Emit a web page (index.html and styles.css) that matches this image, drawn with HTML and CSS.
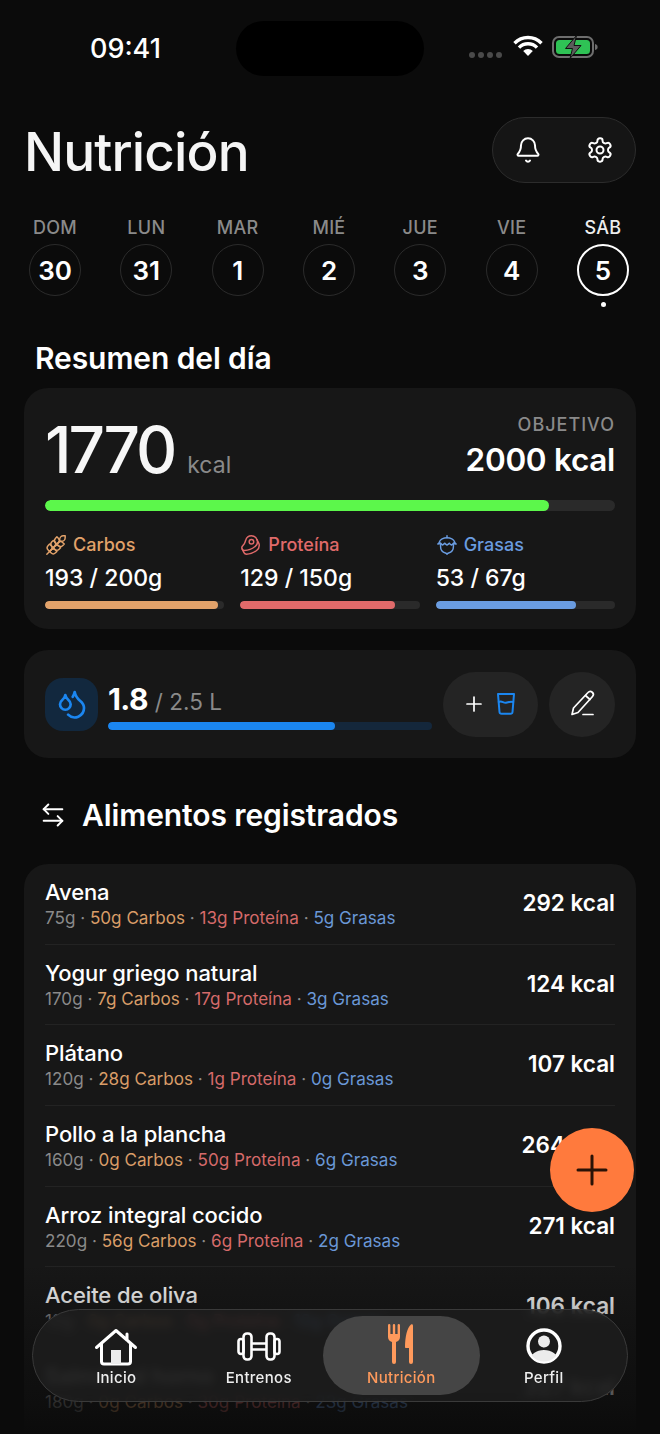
FILE: index.html
```html
<!DOCTYPE html>
<html lang="es">
<head>
<meta charset="utf-8">
<title>Nutrición</title>
<link rel="stylesheet" href="styles.css">
</head>
<body>
<div class="phone">
  <header class="status">
    <span class="time">09:41</span>
    <div class="island"></div>
    <div class="sys">
      <div class="signal"><i></i><i></i><i></i><i></i></div>
      <svg class="wifi" width="30" height="22" viewBox="0 0 30 22"><path d="M1.500 8.200a19 19 0 0 1 27 0M6 12.600a12.600 12.600 0 0 1 18 0" fill="none" stroke="#fff" stroke-width="3.400"/><path d="M10.200 16a6.600 6.600 0 0 1 9.600 0L15 21z" fill="#fff"/></svg>
      <svg class="batt" width="46" height="24" viewBox="0 0 46 24"><rect x="1" y="2" width="40" height="20" rx="6" fill="none" stroke="#6e6e6e" stroke-width="2"/><rect x="4" y="5" width="34" height="14" rx="3.500" fill="#2fc255"/><path d="M43 9c2 .5 2.600 1.500 2.600 3s-.6 2.500-2.600 3z" fill="#6e6e6e"/><path d="M24.500 .5 13.500 13.500h7L18 23.500 29 10.500h-7z" fill="#5c5c5c" stroke="#101010" stroke-width="1"/></svg>
    </div>
  </header>

  <div class="title-row">
    <h1>Nutrición</h1>
    <div class="actions">
      <svg class="ico" width="28" height="28" viewBox="0 0 24 24"><path d="M10.268 21a2 2 0 0 0 3.464 0"/><path d="M3.262 15.326A1 1 0 0 0 4 17h16a1 1 0 0 0 .74-1.673C19.410 13.956 18 12.499 18 8A6 6 0 0 0 6 8c0 4.499-1.411 5.956-2.738 7.326"/></svg>
      <svg class="ico" width="28" height="28" viewBox="0 0 24 24"><path d="M12.220 2h-.44a2 2 0 0 0-2 2v.18a2 2 0 0 1-1 1.730l-.43.25a2 2 0 0 1-2 0l-.15-.08a2 2 0 0 0-2.730.73l-.22.38a2 2 0 0 0 .73 2.730l.15.1a2 2 0 0 1 1 1.720v.51a2 2 0 0 1-1 1.740l-.15.09a2 2 0 0 0-.73 2.730l.22.38a2 2 0 0 0 2.730.73l.15-.08a2 2 0 0 1 2 0l.43.25a2 2 0 0 1 1 1.730V20a2 2 0 0 0 2 2h.44a2 2 0 0 0 2-2v-.18a2 2 0 0 1 1-1.730l.43-.25a2 2 0 0 1 2 0l.15.08a2 2 0 0 0 2.730-.73l.22-.39a2 2 0 0 0-.73-2.730l-.15-.08a2 2 0 0 1-1-1.740v-.5a2 2 0 0 1 1-1.740l.15-.09a2 2 0 0 0 .73-2.730l-.22-.38a2 2 0 0 0-2.730-.73l-.15.08a2 2 0 0 1-2 0l-.43-.25a2 2 0 0 1-1-1.730V4a2 2 0 0 0-2-2z"/><circle cx="12" cy="12" r="3"/></svg>
    </div>
  </div>

  <div class="days">
    <div class="day"><span class="dn">DOM</span><span class="dc">30</span></div>
    <div class="day"><span class="dn">LUN</span><span class="dc">31</span></div>
    <div class="day"><span class="dn">MAR</span><span class="dc">1</span></div>
    <div class="day"><span class="dn">MIÉ</span><span class="dc">2</span></div>
    <div class="day"><span class="dn">JUE</span><span class="dc">3</span></div>
    <div class="day"><span class="dn">VIE</span><span class="dc">4</span></div>
    <div class="day today"><span class="dn">SÁB</span><span class="dc">5</span><i class="dot"></i></div>
  </div>

  <h2 class="resumen">Resumen del día</h2>

  <section class="card summary">
    <div class="sum-top">
      <div class="consumed"><span class="big">1770</span><span class="unit">kcal</span></div>
      <div class="goal"><span class="goal-l">OBJETIVO</span><span class="goal-v">2000 kcal</span></div>
    </div>
    <div class="bar main-bar"><b style="width:88.400%"></b></div>
    <div class="macros">
      <div class="macro carb">
        <div class="m-label"><svg class="mi" width="22" height="22" viewBox="0 0 24 24"><path d="M2 22 16 8"/><path d="M3.470 12.530 5 11l1.530 1.530a3.500 3.500 0 0 1 0 4.940L5 19l-1.530-1.530a3.500 3.500 0 0 1 0-4.940Z"/><path d="M7.470 8.530 9 7l1.530 1.530a3.500 3.500 0 0 1 0 4.940L9 15l-1.530-1.530a3.500 3.500 0 0 1 0-4.940Z"/><path d="M11.470 4.530 13 3l1.530 1.530a3.500 3.500 0 0 1 0 4.940L13 11l-1.530-1.530a3.500 3.500 0 0 1 0-4.940Z"/><path d="M20 2h2v2a4 4 0 0 1-4 4h-2V6a4 4 0 0 1 4-4Z"/><path d="M11.470 17.470 13 19l-1.530 1.530a3.500 3.500 0 0 1-4.940 0L5 19l1.530-1.530a3.500 3.500 0 0 1 4.940 0Z"/><path d="M15.470 13.470 17 15l-1.530 1.530a3.500 3.500 0 0 1-4.940 0L9 15l1.530-1.530a3.500 3.500 0 0 1 4.940 0Z"/><path d="M19.470 9.470 21 11l-1.530 1.530a3.500 3.500 0 0 1-4.940 0L13 11l1.530-1.530a3.500 3.500 0 0 1 4.940 0Z"/></svg>Carbos</div>
        <div class="m-val">193 / 200g</div>
        <div class="bar thin"><b style="width:96.500%"></b></div>
      </div>
      <div class="macro prot">
        <div class="m-label"><svg class="mi" width="22" height="22" viewBox="0 0 24 24"><circle cx="12.500" cy="8.500" r="2.500"/><path d="M12.500 2a6.500 6.500 0 0 0-6.220 4.600c-1.100 3.130-.78 3.900-3.180 6.080A3 3 0 0 0 5 18c4 0 8.400-1.800 11.400-4.300A6.500 6.500 0 0 0 12.500 2Z"/><path d="m18.500 6 2.190 4.500a6.480 6.480 0 0 1 .31 2 6.490 6.490 0 0 1-2.600 5.200C15.400 20.200 11 22 7 22a3 3 0 0 1-2.680-1.660L2.400 16.500"/></svg>Proteína</div>
        <div class="m-val">129 / 150g</div>
        <div class="bar thin"><b style="width:86%"></b></div>
      </div>
      <div class="macro fat">
        <div class="m-label"><svg class="mi" width="22" height="22" viewBox="0 0 24 24"><path d="M12 4V2"/><path d="M5 10v4a7.004 7.004 0 0 0 5.277 6.787c.412.104.802.292 1.102.592L12 22l.621-.621c.3-.3.69-.488 1.102-.592A7.003 7.003 0 0 0 19 14v-4"/><path d="M12 4C8 4 4.500 6 4 8c-.243.97-.919 1.952-2 3 1.310-.082 1.972-.29 3-1 .54.92.982 1.356 2 2 1.452-.647 1.954-1.098 2.500-2 .595.995 1.151 1.427 2.500 2 1.310-.621 1.862-1.058 2.500-2 .629.977 1.162 1.423 2.500 2 1.209-.548 1.680-.967 2-2 1.032.916 1.683 1.157 3 1-1.297-1.036-1.758-2.034-2-3-.5-2-4-4-8-4Z"/></svg>Grasas</div>
        <div class="m-val">53 / 67g</div>
        <div class="bar thin"><b style="width:78.500%"></b></div>
      </div>
    </div>
  </section>

  <section class="card water">
    <div class="w-icon"><svg class="blue" width="32" height="32" viewBox="0 0 24 24"><path d="M7 16.300c2.200 0 4-1.830 4-4.050 0-1.160-.57-2.260-1.710-3.190S7.290 6.750 7 5.300c-.29 1.450-1.140 2.840-2.290 3.760S3 11.100 3 12.250c0 2.220 1.800 4.050 4 4.050z"/><path d="M12.560 6.600A10.970 10.970 0 0 0 14 3.020c.5 2.500 2 4.900 4 6.500s3 3.500 3 5.500a6.980 6.980 0 0 1-11.910 4.970"/></svg></div>
    <div class="w-main">
      <div class="w-text"><span class="w-val">1.8</span><span class="w-of">/ 2.5 L</span></div>
      <div class="bar w-bar"><b style="width:70%"></b></div>
    </div>
    <div class="w-add">
      <svg class="ico" width="18" height="18" viewBox="0 0 18 18"><path d="M9 2v14M2 9h14"/></svg>
      <svg class="blue" width="20" height="26" viewBox="0 0 20 24"><path d="M2 2h16l-1.500 18a2 2 0 0 1-2 1.800h-9a2 2 0 0 1-2-1.800z"/><path d="M2.800 10c3-1.500 4.500 1.200 7.200.7s4-1.600 7.200-.7"/></svg>
    </div>
    <div class="w-edit">
      <svg class="ico" width="30" height="30" viewBox="0 0 30 30"><path d="M21 3.500a3 3 0 0 1 4.500 4L11 23.500l-6 2 1.500-6.500z"/><path d="M18.500 6.500l4.500 4M16 25.500h10"/></svg>
    </div>
  </section>

  <div class="log-head">
    <svg class="ico" width="28" height="28" viewBox="0 0 24 24"><path d="m8 3-4 4 4 4"/><path d="M4 7h16"/><path d="m16 13 4 4-4 4"/><path d="M20 17H4"/></svg>
    <h2>Alimentos registrados</h2>
  </div>

  <section class="card foods">
    <div class="food"><div class="f-main"><div class="f-name">Avena</div><div class="f-sub">75g · <span class="c">50g Carbos</span> · <span class="p">13g Proteína</span> · <span class="g">5g Grasas</span></div></div><div class="f-kcal">292 kcal</div></div>
    <div class="food"><div class="f-main"><div class="f-name">Yogur griego natural</div><div class="f-sub">170g · <span class="c">7g Carbos</span> · <span class="p">17g Proteína</span> · <span class="g">3g Grasas</span></div></div><div class="f-kcal">124 kcal</div></div>
    <div class="food"><div class="f-main"><div class="f-name">Plátano</div><div class="f-sub">120g · <span class="c">28g Carbos</span> · <span class="p">1g Proteína</span> · <span class="g">0g Grasas</span></div></div><div class="f-kcal">107 kcal</div></div>
    <div class="food"><div class="f-main"><div class="f-name">Pollo a la plancha</div><div class="f-sub">160g · <span class="c">0g Carbos</span> · <span class="p">50g Proteína</span> · <span class="g">6g Grasas</span></div></div><div class="f-kcal">264 kcal</div></div>
    <div class="food"><div class="f-main"><div class="f-name">Arroz integral cocido</div><div class="f-sub">220g · <span class="c">56g Carbos</span> · <span class="p">6g Proteína</span> · <span class="g">2g Grasas</span></div></div><div class="f-kcal">271 kcal</div></div>
    <div class="food"><div class="f-main"><div class="f-name">Aceite de oliva</div><div class="f-sub">12g · <span class="c">0g Carbos</span> · <span class="p">0g Proteína</span> · <span class="g">12g Grasas</span></div></div><div class="f-kcal">106 kcal</div></div>
    <div class="food"><div class="f-main"><div class="f-name">Salmón al horno</div><div class="f-sub">180g · <span class="c">0g Carbos</span> · <span class="p">30g Proteína</span> · <span class="g">23g Grasas</span></div></div><div class="f-kcal">327 kcal</div></div>
  </section>

  <div class="fade"></div>

  <button class="fab" aria-label="Añadir"><svg width="34" height="34" viewBox="0 0 34 34"><path d="M17 3v28M3 17h28" fill="none" stroke="#2a1206" stroke-width="3" stroke-linecap="round"/></svg></button>

  <nav class="nav">
    <div class="tab">
      <svg width="44" height="38" viewBox="0 0 44 38"><path d="M2.500 19.500 22 2.500l19.500 17M33 6v6M7.500 16v17.500a2.500 2.500 0 0 0 2.500 2.500h24a2.500 2.500 0 0 0 2.500-2.500V16" fill="none" stroke="#fff" stroke-width="3" stroke-linecap="round" stroke-linejoin="round"/><rect x="17" y="22" width="10" height="14" fill="#ececec"/></svg>
      <span>Inicio</span>
    </div>
    <div class="tab">
      <svg width="44" height="38" viewBox="0 0 44 38"><g fill="none" stroke="#fff" stroke-width="2.600" stroke-linejoin="round"><rect x="1.500" y="11" width="5" height="15" rx="2.500"/><rect x="6.500" y="5.500" width="8" height="26" rx="3.500"/><rect x="29.500" y="5.500" width="8" height="26" rx="3.500"/><rect x="37.500" y="11" width="5" height="15" rx="2.500"/><path d="M14.500 15.500h15M14.500 21.500h15"/></g></svg>
      <span>Entrenos</span>
    </div>
    <div class="tab active">
      <svg width="44" height="42" viewBox="0 0 44 42"><path d="M9 1.200a1.200 1.200 0 0 1 2.400 0V10h2.400V1.200a1.200 1.200 0 0 1 2.400 0V10h2.400V1.200a1.200 1.200 0 0 1 2.400 0V13c0 2.500-1.600 4.400-4 5V38a2 2 0 0 1-4 0V18c-2.400-.6-4-2.500-4-5z" fill="#ff9a5c"/><path d="M32 .5c1.200-.8 2-.2 2 1.500V38a2 2 0 0 1-4 0V24h-3c-.7 0-1-.5-1-1C26 13 28 4 32 .5z" fill="#ff9a5c"/></svg>
      <span>Nutrición</span>
    </div>
    <div class="tab">
      <svg width="44" height="38" viewBox="0 0 44 38"><defs><clipPath id="ring"><circle cx="22" cy="18" r="15.500"/></clipPath></defs><circle cx="22" cy="18" r="16" fill="none" stroke="#fff" stroke-width="3.400"/><circle cx="22" cy="13.500" r="6" fill="#ececec"/><ellipse cx="22" cy="32" rx="14" ry="10" fill="#ececec" clip-path="url(#ring)"/></svg>
      <span>Perfil</span>
    </div>
  </nav>
</div>
</body>
</html>
```
FILE: styles.css
```css
* { box-sizing: border-box; margin: 0; padding: 0; }
html, body { background: #0b0b0b; }
body { font-family: Inter, "Liberation Sans", sans-serif; color: #fff; }
.phone { position: relative; width: 660px; height: 1434px; overflow: hidden; background: #0b0b0b; padding: 0 24px; }

.ico { fill: none; stroke: #fff; stroke-width: 1.700; stroke-linecap: round; stroke-linejoin: round; }
.blue { fill: none; stroke: #1b86f0; stroke-width: 2; stroke-linecap: round; stroke-linejoin: round; }

.status { position: relative; height: 96px; display: flex; align-items: flex-start; }
.time { margin: 33px 0 0 66px; font-size: 27px; line-height: 32px; font-weight: 500; }
.island { position: absolute; left: 212px; top: 21px; width: 188px; height: 55px; border-radius: 28px; background: #000; }
.sys { margin-left: auto; margin-top: 35px; margin-right: 38px; display: flex; align-items: center; gap: 9px; }
.signal { display: flex; gap: 3px; margin-top: 16px; margin-right: 2px; }
.signal i { width: 6px; height: 6px; border-radius: 50%; background: #4a4a4a; }
.wifi { margin-top: -2px; }

.title-row { display: flex; align-items: center; justify-content: space-between; height: 66px; margin-top: 21px; }
h1 { font-size: 53px; line-height: 66px; font-weight: 500; letter-spacing: -.85px; color: #f5f5f5; margin-top: 4px; }
.actions { width: 144px; height: 66px; border-radius: 33px; border: 1px solid #2c2c2c; background: #151515; display: flex; align-items: center; justify-content: center; gap: 44px; }

.days { display: flex; justify-content: space-between; margin-top: 34px; padding: 0 7px 0 5px; }
.day { position: relative; width: 52px; display: flex; flex-direction: column; align-items: center; gap: 5px; }
.dn { font-size: 18px; line-height: 22px; font-weight: 500; letter-spacing: .3px; color: #8a8a8a; white-space: nowrap; }
.dc { width: 52px; height: 52px; border-radius: 50%; border: 1.500px solid #2b2b2b; display: flex; align-items: center; justify-content: center; font-size: 26px; font-weight: 600; }
.today .dn { color: #eee; }
.today .dc { border: 2px solid #fff; }
.dot { position: absolute; left: 24px; bottom: -11px; width: 5px; height: 5px; border-radius: 50%; background: #fff; }

.resumen { font-size: 30px; line-height: 36px; font-weight: 600; margin: 44px 0 12px 11px; letter-spacing: -.1px; }

.card { background: #171717; border-radius: 24px; }
.summary { height: 241px; padding: 21px 21px 0; }
.sum-top { display: flex; justify-content: space-between; height: 91px; }
.consumed { display: flex; align-items: flex-end; gap: 13px; height: 78px; }
.big { font-size: 64px; line-height: 78px; font-weight: 500; letter-spacing: -3px; color: #f7f7f7; margin-bottom: -2px; }
.unit { font-size: 23px; line-height: 26px; color: #8a8a8a; margin-bottom: 9px; }
.goal { display: flex; flex-direction: column; align-items: flex-end; gap: 4px; margin-top: 4px; }
.goal-l { font-size: 18px; line-height: 24px; font-weight: 500; letter-spacing: 1px; color: #8a8a8a; }
.goal-v { font-size: 31.500px; line-height: 38px; font-weight: 600; letter-spacing: -.3px; }

.bar { background: #2a2a2a; border-radius: 6px; overflow: hidden; }
.bar b { display: block; height: 100%; border-radius: 6px; }
.main-bar { height: 11px; }
.main-bar b { background: #5cf74b; }
.macros { display: grid; grid-template-columns: repeat(3, 1fr); gap: 16px; margin-top: 22px; }
.m-label { display: flex; align-items: center; gap: 6px; font-size: 18px; line-height: 24px; font-weight: 500; }
.m-val { font-size: 23px; line-height: 30px; font-weight: 500; margin-top: 6px; }
.thin { height: 8px; margin-top: 8px; }
.mi { fill: none; stroke: currentColor; stroke-width: 1.600; stroke-linecap: round; stroke-linejoin: round; }
.carb .m-label { color: #e2a26a; }
.carb b { background: #e2a26a; }
.prot .m-label { color: #e06a6a; }
.prot b { background: #e06a6a; }
.fat .m-label { color: #6a9ce0; }
.fat b { background: #6a9ce0; }

.water { margin-top: 21px; height: 108px; padding: 0 21px; display: flex; align-items: center; }
.w-icon { width: 53px; height: 53px; border-radius: 18px; background: #12283e; display: flex; align-items: center; justify-content: center; }
.w-main { width: 324px; margin-left: 10px; }
.w-text { display: flex; align-items: baseline; gap: 7px; height: 38px; margin-top: 2px; }
.w-val { font-size: 30px; line-height: 36px; font-weight: 700; letter-spacing: -.6px; }
.w-of { font-size: 22.500px; line-height: 36px; color: #8a8a8a; }
.w-bar { height: 8px; margin-top: 3px; background: #14273b; }
.w-bar b { background: #1b86f0; }
.w-add { width: 95px; height: 65px; border-radius: 33px; background: #242424; margin-left: 11px; display: flex; align-items: center; justify-content: center; gap: 13px; }
.w-edit { width: 66px; height: 65px; border-radius: 50%; background: #242424; margin-left: 11px; display: flex; align-items: center; justify-content: center; }

.log-head { display: flex; align-items: center; gap: 15px; height: 40px; margin: 37px 0 29px 15px; }
.log-head h2 { font-size: 30px; line-height: 40px; font-weight: 600; letter-spacing: -.1px; }

.foods { padding: 0 21px; height: 620px; }
.food { display: flex; align-items: center; justify-content: space-between; height: 80.700px; border-bottom: 1px solid #232323; padding-bottom: 2px; }
.food:last-child { border-bottom: 0; }
.f-main { padding-top: 2px; }
.f-name { font-size: 22px; line-height: 28px; font-weight: 500; letter-spacing: -.1px; }
.f-sub { font-size: 17.100px; line-height: 24px; color: #8a8a8a; white-space: nowrap; }
.f-kcal { font-size: 22.500px; line-height: 28px; font-weight: 600; }
.c { color: #d99d68; }
.p { color: #d56a6a; }
.g { color: #6a97d6; }

.fade { position: absolute; left: 0; right: 0; bottom: 0; height: 170px; background: linear-gradient(to bottom, rgba(11,11,11,0), rgba(11,11,11,.45) 45%, rgba(11,11,11,.72) 80%, #0b0b0b); pointer-events: none; }

.fab { position: absolute; left: 550px; top: 1128px; width: 84px; height: 84px; border: 0; border-radius: 50%; background: #ff7a3d; display: flex; align-items: center; justify-content: center; }

.nav { position: absolute; left: 32px; top: 1309px; width: 596px; height: 93px; border-radius: 47px; border: 1.500px solid #3a3a3a; background: rgba(30,30,30,.8); -webkit-backdrop-filter: blur(4px); backdrop-filter: blur(4px); display: grid; grid-template-columns: repeat(4, 142.500px); justify-content: center; align-items: stretch; padding: 6px 7px; }
.tab { display: flex; flex-direction: column; align-items: center; justify-content: flex-end; padding-bottom: 8px; gap: 3px; font-size: 15px; line-height: 18px; font-weight: 500; letter-spacing: .3px; color: #eee; }
.tab svg { display: block; }
.active { position: relative; width: 157px; justify-self: center; border-radius: 40px; background: #454545; color: #ff9a5c; }
```
